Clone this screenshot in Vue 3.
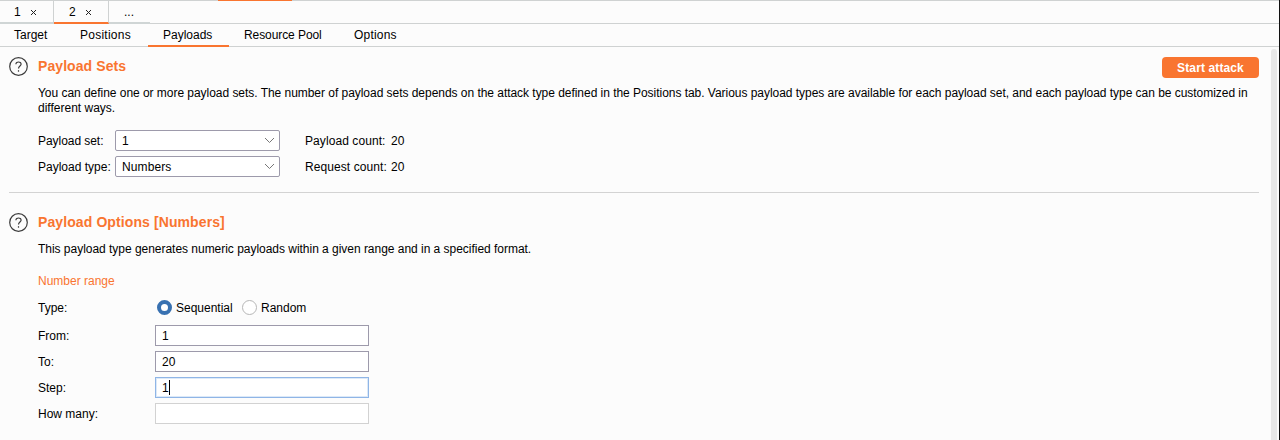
<script setup>
import { ref } from 'vue'

const sections = [
  { name: 'Target', cls: 'target' },
  { name: 'Positions', cls: 'positions' },
  { name: 'Payloads', cls: 'payloads' },
  { name: 'Resource Pool', cls: 'pool' },
  { name: 'Options', cls: 'options' },
]
const active = ref('Payloads')
const selects = [
  { label: 'Payload set:', value: '1', count: 'Payload count:', cls: 'set' },
  { label: 'Payload type:', value: 'Numbers', count: 'Request count:', cls: 'type' },
]
const fields = [
  { label: 'From:', value: '1', cls: 'from' },
  { label: 'To:', value: '20', cls: 'to' },
  { label: 'Step:', value: '1', cls: 'step' },
  { label: 'How many:', value: '', cls: 'many' },
]
</script>

<template>
  <div class="window">
    <div class="topline"><div class="marker"></div></div>
    <div class="tabs">
      <div class="tab first"><span>1</span><svg width="7" height="7" viewBox="0 0 7 7"><path d="M1 1L6 6M6 1L1 6" /></svg></div>
      <div class="tab second"><span>2</span><svg width="7" height="7" viewBox="0 0 7 7"><path d="M1 1L6 6M6 1L1 6" /></svg></div>
      <div class="tab more"><span>...</span></div>
    </div>
    <nav class="sections">
      <div v-for="s in sections" :key="s.name" class="section" :class="[s.cls, { active: s.name === active }]" @click="active = s.name"><span>{{ s.name }}</span></div>
    </nav>
    <div class="body">
      <main class="panel">
        <header class="head">
          <svg class="help" width="19" height="19" viewBox="0 0 19 19"><circle cx="9.5" cy="9.5" r="8.8" /><path d="M6.9 7.2C6.9 4.2 12.2 4.3 12.1 7.2C12 9 9.5 9.1 9.5 11.6" /><path d="M9.5 13.2V14.7" /></svg>
          <h2 class="sets">Payload Sets</h2>
          <button class="attack"><span>Start attack</span></button>
        </header>
        <p class="desc"><span class="line1">You can define one or more payload sets. The number of payload sets depends on the attack type defined in the Positions tab. Various payload types are available for each payload set, and each payload type can be customized in</span><br><span class="line2">different ways.</span></p>
        <div class="selects">
          <div v-for="s in selects" :key="s.label" class="selrow" :class="s.cls">
            <div class="label"><span>{{ s.label }}</span></div>
            <div class="select"><span>{{ s.value }}</span><svg width="11" height="7" viewBox="0 0 11 7"><path d="M1 1L5.5 5.5L10 1" /></svg></div>
            <div class="count"><span>{{ s.count }}</span></div><span class="num">20</span>
          </div>
        </div>
        <div class="rule"></div>
        <header class="head second-head">
          <svg class="help" width="19" height="19" viewBox="0 0 19 19"><circle cx="9.5" cy="9.5" r="8.8" /><path d="M6.9 7.2C6.9 4.2 12.2 4.3 12.1 7.2C12 9 9.5 9.1 9.5 11.6" /><path d="M9.5 13.2V14.7" /></svg>
          <h2 class="opts">Payload Options [Numbers]</h2>
        </header>
        <p class="desc info"><span>This payload type generates numeric payloads within a given range and in a specified format.</span></p>
        <h3><span>Number range</span></h3>
        <div class="row radios">
          <div class="flabel">Type:</div>
          <span class="radio on"></span><span class="seq">Sequential</span>
          <span class="radio"></span><span class="rand">Random</span>
        </div>
        <div v-for="f in fields" :key="f.label" class="row" :class="f.cls">
          <div class="flabel"><span>{{ f.label }}</span></div>
          <div class="input"><span>{{ f.value }}</span><i v-if="f.cls === 'step'"></i></div>
        </div>
      </main>
      <div class="scroll"><div class="thumb"></div></div>
    </div>
  </div>
</template>

<style>
html, body { margin: 0; background: #fcfcfc; overflow: hidden; }
</style>

<style scoped>
* { box-sizing: border-box; }
.window { width: 1280px; height: 440px; display: flex; flex-direction: column; overflow: hidden; background: #fcfcfc; border-right: 1px solid #101010; font: 12px/15px "Liberation Sans", Arial, sans-serif; color: #000; white-space: nowrap; }
.topline { height: 1px; flex: none; background: #cfd2d2; padding-left: 218px; }
.marker { width: 74px; height: 1px; background: #f97530; }
.tabs { height: 23px; flex: none; display: flex; border-bottom: 1px solid #cfd2d2; }
.tab { height: 23px; display: flex; align-items: center; border-bottom: 2px solid #cfd5d5; border-right: 1px solid #cfd2d2; }
.tab span { padding-top: 2px; }
.tab svg { fill: none; stroke: #222; stroke-width: 1; margin-top: 2px; }
.first { width: 54px; padding-left: 14px; gap: 9px; }
.second { width: 55px; padding-left: 15px; gap: 9px; border-bottom-color: #f97530; }
.more { width: 41px; padding-left: 15px; border-right: 0; }
.sections { height: 23px; flex: none; display: flex; border-bottom: 1px solid #cfd2d2; }
.section { height: 23px; padding-top: 4px; border-bottom: 2px solid transparent; }
.section.active { border-bottom-color: #f97530; }
.target { width: 65px; padding-left: 14px; }
.positions { width: 83px; padding-left: 15px; letter-spacing: .25px; }
.payloads { width: 81px; padding-left: 15px; }
.pool { width: 95px; padding-left: 15px; letter-spacing: -.08px; }
.options { padding-left: 30px; letter-spacing: .2px; }
.pool, .options { flex: none; }
.body { flex: 1; display: flex; min-height: 0; }
.panel { width: 1259px; padding: 9px 0 0 9px; flex: none; }
.head { height: 23px; display: flex; align-items: flex-start; }
.help { flex: none; margin-top: 1px; fill: none; stroke: #3c3c3c; stroke-width: 1.2; }
h2 { margin: 1px 0 0 10px; font-size: 14px; line-height: 18px; color: #f97530; letter-spacing: .08px; }
.attack { width: 97px; height: 21px; margin: 1px 0 0 auto; padding: 1px 0 0; border: 0; border-radius: 4px; background: #f97530; color: #fff; font: bold 12px/20px "Liberation Sans", Arial, sans-serif; letter-spacing: .12px; }
.desc { margin: 7px 0 0 29px; height: 30px; }
.line1 { letter-spacing: -.037px; }
.selects { margin: 14px 0 0 29px; }
.selrow { display: flex; align-items: center; height: 21px; margin-bottom: 5px; }
.label { width: 77px; padding-top: 2px; }
.set .label { letter-spacing: -.05px; }
.select { width: 165px; height: 21px; flex: none; border: 1px solid #9d9aab; border-radius: 2px; background: #fff; display: flex; align-items: center; justify-content: space-between; padding: 0 4px 0 6px; }
.select span { padding-top: 2px; }
.type .select span { letter-spacing: .1px; }
.select svg { fill: none; stroke: #777; stroke-width: 1; }
.count { width: 86px; margin-left: 25px; padding-top: 2px; flex: none; letter-spacing: .08px; }
.num { padding-top: 2px; letter-spacing: .2px; }
.rule { height: 1px; margin-top: 15px; background: #d3d3d3; }
.second-head { margin-top: 19px; }
.opts { letter-spacing: .1px; }
.info { margin-top: 7px; height: 15px; letter-spacing: -.027px; }
h3 { margin: 17px 0 0 29px; font-size: 12px; line-height: 15px; font-weight: normal; color: #f97530; }
.row { display: flex; align-items: center; height: 21px; margin: 0 0 5px 29px; }
.radios { height: 15px; margin-top: 11px; margin-bottom: 10px; }
.radios .flabel, .seq, .rand { padding-top: 2px; }
.flabel { width: 117px; flex: none; padding-top: 2px; }
.radio { width: 15px; height: 15px; border: 1px solid #b6b6b6; border-radius: 50%; background: #fff; flex: none; }
.radio.on { border: 4px solid #3871b1; margin-left: 2px; }
.seq { width: 66px; margin-left: 4px; }
.rand { margin-left: 4px; }
.input { width: 214px; height: 21px; border: 1px solid #9d9aab; background: #fff; display: flex; align-items: center; padding-left: 6px; }
.input span { padding-top: 1px; }
.to .input { letter-spacing: .2px; }
.step .input { border-color: #8fb5e6; box-shadow: inset 0 0 0 1px #dce9f8; }
.step i { width: 1px; height: 15px; background: #000; }
.many .input { border-color: #d2d2d2; }
.scroll { padding: 2px 0 0 12px; }
.thumb { width: 6px; height: 391px; border-radius: 3px 3px 0 0; background: #e8e8e8; }
</style>
